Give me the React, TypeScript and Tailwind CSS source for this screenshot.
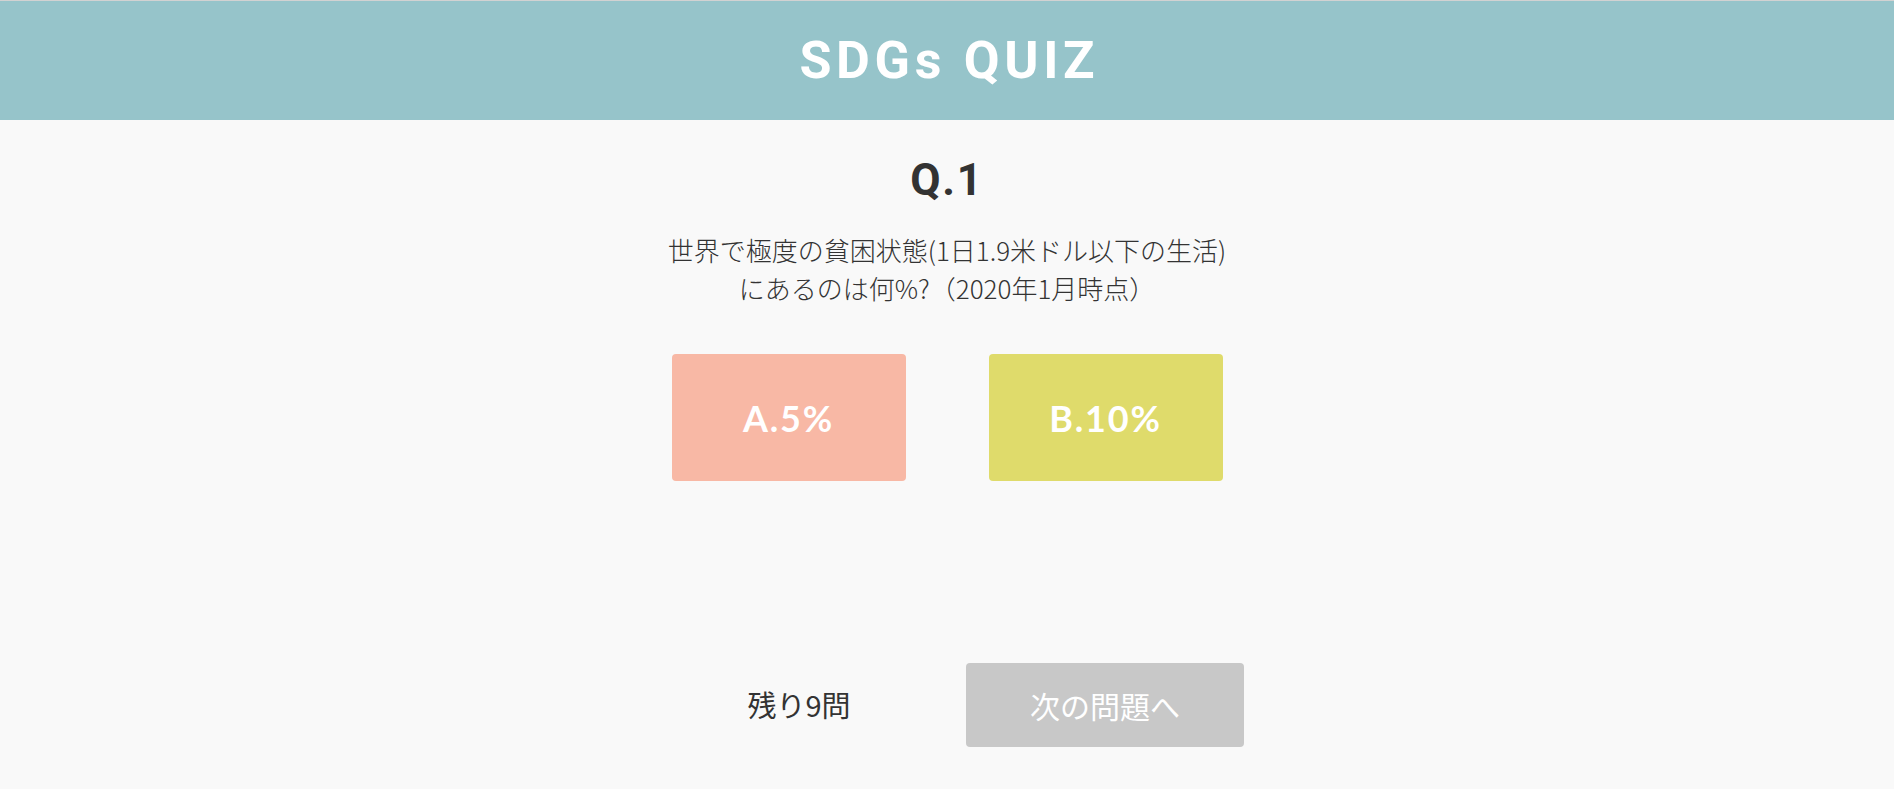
import React from "react";

export default function App() {
  return (
    <div className="min-h-[789px] w-full bg-[#f9f9f9] flex flex-col">
      <header className="h-[120px] w-full bg-[#96c4ca] border-t border-[#d2d2d2] flex items-center justify-center">
        <h1 className="text-white text-[52px] font-bold tracking-[0.09em] leading-none font-['Roboto',_sans-serif] pl-[0.09em]">
          SDGs QUIZ
        </h1>
      </header>
      <main className="flex flex-col items-center">
        <h2 className="mt-[36px] h-[48px] leading-[48px] text-[44px] font-bold text-[#333] font-['Roboto',_sans-serif] tracking-[0.04em]">
          Q.1
        </h2>
        <p className="mt-[27px] text-center text-[26px] leading-[38px] text-[#333] font-light font-['Noto_Sans_CJK_JP',_sans-serif]">
          世界で極度の貧困状態(1日1.9米ドル以下の生活)
          <br />
          にあるのは何%?（2020年1月時点）
        </p>
        <div className="mt-[47px] flex gap-[83px]">
          <button className="w-[234px] h-[127px] rounded-[4px] bg-[#f8b8a5] text-white text-[36px] font-bold tracking-[0.05em] font-['Lato',_sans-serif] flex items-center justify-center">
            A.5%
          </button>
          <button className="w-[234px] h-[127px] rounded-[4px] bg-[#dfdb6b] text-white text-[36px] font-bold tracking-[0.05em] font-['Lato',_sans-serif] flex items-center justify-center">
            B.10%
          </button>
        </div>
        <div className="mt-[182px] flex items-center gap-[28px] pl-[10px]">
          <div className="w-[278px] text-center text-[29px] text-[#333] font-['Noto_Sans_CJK_JP',_sans-serif]">
            残り9問
          </div>
          <button className="w-[278px] h-[84px] rounded-[4px] bg-[#c8c8c8] text-white text-[30px] font-['Noto_Sans_CJK_JP',_sans-serif] flex items-center justify-center">
            次の問題へ
          </button>
        </div>
      </main>
    </div>
  );
}
